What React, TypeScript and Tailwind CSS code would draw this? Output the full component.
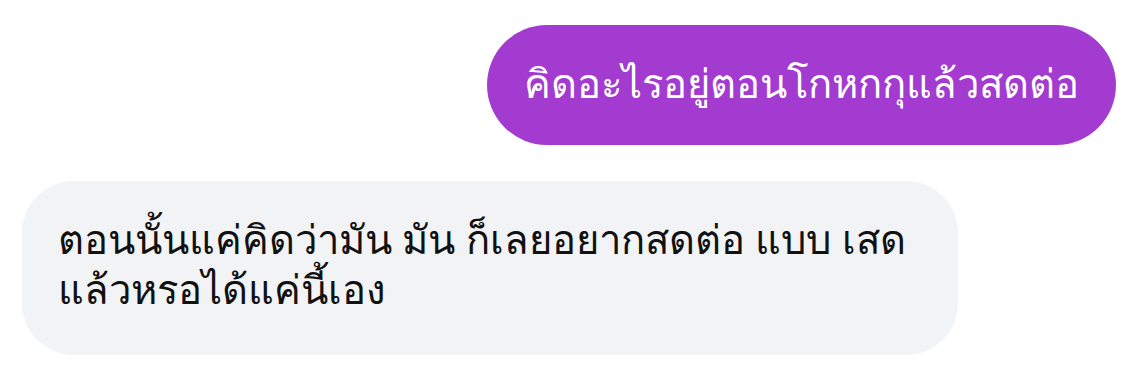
export default function App() {
  return (
    <div className="w-[1144px] h-[377px] bg-white font-['Noto_Sans',sans-serif] flex flex-col pt-[25px] pl-[22px] pr-[28px]">
      <div className="flex justify-end">
        <div className="h-[120px] rounded-full bg-[#a33bd1] text-white text-[40px] leading-[50px] px-[37px] pb-[4px] flex items-center">
          คิดอะไรอยู่ตอนโกหกกุแล้วสดต่อ
        </div>
      </div>
      <div className="mt-[36px] flex">
        <div className="w-[936px] rounded-[52px] bg-[#f2f3f5] text-[#111] text-[40px] leading-[50px] px-[36px] pt-[33px] pb-[41px]">
          ตอนนั้นแค่คิดว่ามัน มัน ก็เลยอยากสดต่อ แบบ เสด แล้วหรอได้แค่นี้เอง
        </div>
      </div>
    </div>
  );
}
